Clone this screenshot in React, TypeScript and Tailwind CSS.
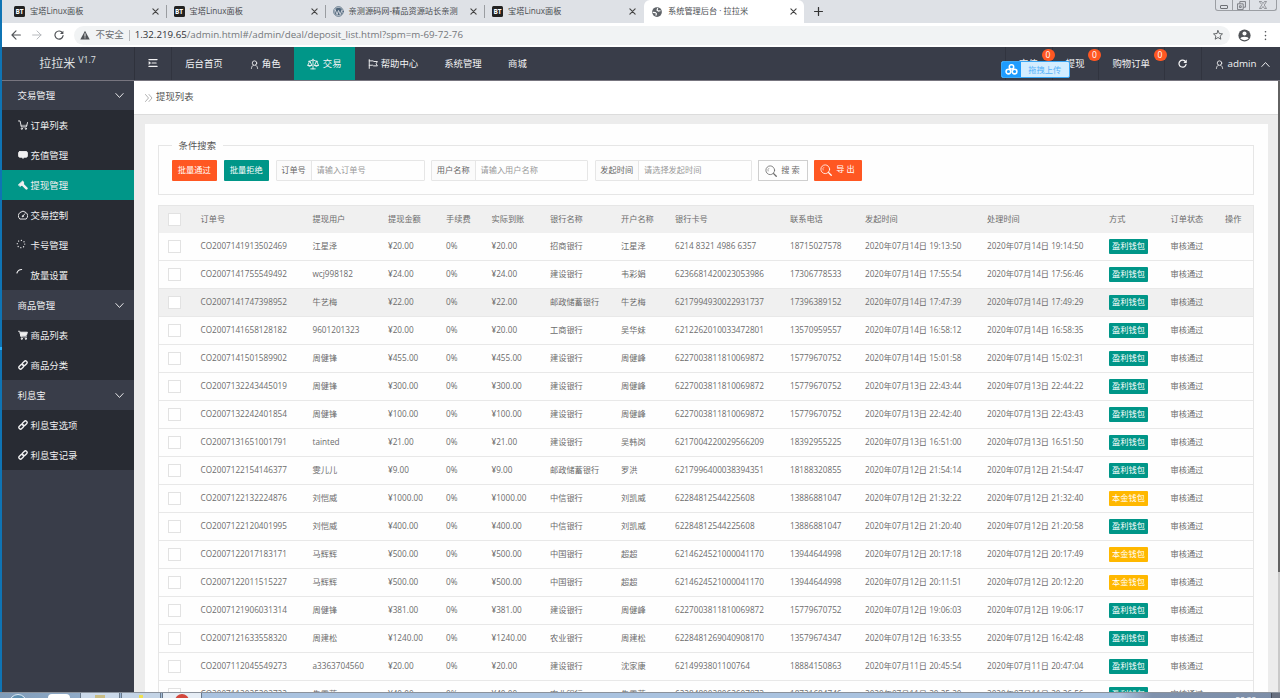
import React from "react";

const tabs = [
  { title: "宝塔Linux面板", icon: "bt", width: "w-[165px] pl-[12.500px]" },
  { title: "宝塔Linux面板", icon: "bt", width: "w-[159px] pl-[7px]" },
  { title: "亲测源码网-精品资源站长亲测", icon: "wp", width: "w-[159.500px] pl-[7px]" },
  { title: "宝塔Linux面板", icon: "bt", width: "w-[159px] pl-[7px]" },
];

const rows: string[][] = [
  ["CO2007141913502469", "江星泽", "20.00", "招商银行", "江星泽", "6214 8321 4986 6357", "18715027578", "14日 19:13:50", "14日 19:14:50"],
  ["CO2007141755549492", "wcj998182", "24.00", "建设银行", "韦彩娟", "6236681420023053986", "17306778533", "14日 17:55:54", "14日 17:56:46"],
  ["CO2007141747398952", "牛艺梅", "22.00", "邮政储蓄银行", "牛艺梅", "6217994930022931737", "17396389152", "14日 17:47:39", "14日 17:49:29"],
  ["CO2007141658128182", "9601201323", "20.00", "工商银行", "吴华妹", "6212262010033472801", "13570959557", "14日 16:58:12", "14日 16:58:35"],
  ["CO2007141501589902", "周健锋", "455.00", "建设银行", "周健峰", "6227003811810069872", "15779670752", "14日 15:01:58", "14日 15:02:31"],
  ["CO2007132243445019", "周健锋", "300.00", "建设银行", "周健峰", "6227003811810069872", "15779670752", "13日 22:43:44", "13日 22:44:22"],
  ["CO2007132242401854", "周健锋", "100.00", "建设银行", "周健峰", "6227003811810069872", "15779670752", "13日 22:42:40", "13日 22:43:43"],
  ["CO2007131651001791", "tainted", "21.00", "建设银行", "吴韩岗", "6217004220029566209", "18392955225", "13日 16:51:00", "13日 16:51:50"],
  ["CO2007122154146377", "雯儿儿", "9.00", "邮政储蓄银行", "罗洪", "6217996400038394351", "18188320855", "12日 21:54:14", "12日 21:54:47"],
  ["CO2007122132224876", "刘恺威", "1000.00", "中信银行", "刘凯威", "62284812544225608", "13886881047", "12日 21:32:22", "12日 21:32:40", "p"],
  ["CO2007122120401995", "刘恺威", "400.00", "中信银行", "刘凯威", "62284812544225608", "13886881047", "12日 21:20:40", "12日 21:20:58"],
  ["CO2007122017183171", "马辉辉", "500.00", "中国银行", "超超", "6214624521000041170", "13944644998", "12日 20:17:18", "12日 20:17:49", "p"],
  ["CO2007122011515227", "马辉辉", "500.00", "中国银行", "超超", "6214624521000041170", "13944644998", "12日 20:11:51", "12日 20:12:20", "p"],
  ["CO2007121906031314", "周健锋", "381.00", "建设银行", "周健峰", "6227003811810069872", "15779670752", "12日 19:06:03", "12日 19:06:17"],
  ["CO2007121633558320", "周建松", "1240.00", "农业银行", "周建松", "6228481269040908170", "13579674347", "12日 16:33:55", "12日 16:42:48"],
  ["CO2007112045549273", "a3363704560", "20.00", "建设银行", "沈家康", "6214993801100764", "18884150863", "11日 20:45:54", "11日 20:47:04"],
  ["CO2007112025202722", "朱雪莲", "40.00", "农业银行", "朱雪莲", "6228480028062607873", "18721684746", "11日 20:25:20", "11日 20:26:56"],
];

const headings = ["订单号", "提现用户", "提现金额", "手续费", "实际到账", "银行名称", "开户名称", "银行卡号", "联系电话", "发起时间", "处理时间", "方式", "订单状态", "操作"];

const gridCols =
  "grid grid-cols-[42px_112px_75.5px_58px_45.5px_58.5px_71px_54px_115px_75px_122px_122px_61.5px_54.5px_1fr] items-center";

function Svg({ children, className = "" }: { children: React.ReactNode; className?: string }) {
  return (
    <svg viewBox="0 0 16 16" className={`shrink-0 ${className}`} fill="none" stroke="currentColor" strokeWidth="1.5" strokeLinecap="round" strokeLinejoin="round">
      {children}
    </svg>
  );
}

const UserIcon = ({ className = "" }) => (
  <Svg className={className}>
    <circle cx="8" cy="5.500" r="4" />
    <path d="M6 9.200C4 10.200 2.800 12 2.500 15M10 9.200c2 1 3.200 2.800 3.500 5.800" />
  </Svg>
);
const Chevron = ({ className = "" }) => (
  <Svg className={className}><path d="M1.500 4.500 8 11.500 14.500 4.500" strokeWidth="1.700" /></Svg>
);
const Close = () => (
  <Svg className="size-[7px] text-[#444]"><path d="m2 2 12 12M14 2 2 14" strokeWidth="2.600" /></Svg>
);

function SideIcon({ name }: { name: string }) {
  const c = "size-[10px] -translate-y-px";
  switch (name) {
    case "cart":
      return <Svg className={c}><path d="M.8 1.500h2.500l2 9.500h8l2-7" /><path d="M5 8.500h9.300" strokeWidth="1" /><circle cx="6" cy="14" r="1" /><circle cx="12.500" cy="14" r="1" /></Svg>;
    case "chat":
      return <Svg className={c}><path d="M3 2.500h10q2 0 2 2v5q0 2-2 2h-3l-2 2-2-2H3q-2 0-2-2v-5q0-2 2-2z" fill="currentColor" /></Svg>;
    case "gavel":
      return <Svg className={c}><path d="M1 7.500 7.500 1.500l2 3.500-5.500 5z" fill="currentColor" /><path d="m7.500 7.500 6 6" strokeWidth="4" /></Svg>;
    case "gauge":
      return <Svg className={c}><path d="M2.500 14a7.200 7.200 0 1 1 11 0zM7.500 10l3.500-4" /><circle cx="7.500" cy="10" r=".8" /></Svg>;
    case "dots":
      return <Svg className="size-[10px] -translate-x-[2px] -translate-y-[2px]"><circle cx="8" cy="8" r="6" strokeDasharray=".1 4.600" strokeWidth="2" /></Svg>;
    case "arc":
      return <Svg className="size-[10px] -translate-x-[2px] -translate-y-[3px]"><path d="M1.500 8A8 8 0 0 1 9 2.500" strokeWidth="1.800" /></Svg>;
    case "cartfill":
      return <Svg className={c}><path d="M.8 2h2l2 9h9" /><path d="M4 3.500h11L13.500 8.500 5 9.500z" fill="currentColor" /><circle cx="6" cy="14" r="1" fill="currentColor" /><circle cx="12.500" cy="14" r="1" fill="currentColor" /></Svg>;
    default:
      return (
        <Svg className={c}>
          <rect x="-4.200" y="-2.700" width="8.400" height="5.400" rx="2.700" transform="translate(10.800 5.200) rotate(-45)" strokeWidth="2.200" />
          <rect x="-4.200" y="-2.700" width="8.400" height="5.400" rx="2.700" transform="translate(5.200 10.800) rotate(-45)" strokeWidth="2.200" />
        </Svg>
      );
  }
}

const menu = [
  { title: "交易管理", items: [["cart", "订单列表"], ["chat", "充值管理"], ["gavel", "提现管理"], ["gauge", "交易控制"], ["dots", "卡号管理"], ["arc", "放量设置"]] },
  { title: "商品管理", items: [["cartfill", "商品列表"], ["link", "商品分类"]] },
  { title: "利息宝", items: [["link", "利息宝选项"], ["link", "利息宝记录"]] },
];

function TabIcon({ kind }: { kind: string }) {
  if (kind === "bt")
    return <span className="flex size-[11px] shrink-0 items-center justify-center rounded-[1.5px] bg-[#222] text-[6.5px] font-bold text-white">BT</span>;
  return (
    <Svg className="size-[11px] text-[#50677c]">
      <circle cx="8" cy="8" r="7" strokeWidth="1.300" />
      <circle cx="8" cy="8" r="5.600" fill="currentColor" stroke="none" />
      <path d="M3 5l3 7.500 2-6 2.500 6L13 6" stroke="#dee1e6" strokeWidth="1.300" />
    </Svg>
  );
}

function BrowserChrome() {
  return (
    <>
      <div className="flex h-[23px] shrink-0 items-stretch bg-[#dee1e6] text-[8.2px] text-[#4a4d51]">
        {tabs.map((t, i) => (
          <div key={i} className={`flex items-center ${t.width}`}>
            <TabIcon kind={t.icon} />
            <span className="ml-[5px] grow whitespace-nowrap">{t.title}</span>
            <Close />
            <span className={`ml-[7px] h-[13px] w-px ${i === 3 ? "bg-transparent" : "bg-[#9a9da1]"}`} />
          </div>
        ))}
        <div className="flex w-[160px] items-center rounded-t-[6px] bg-white pl-[8px] pr-[7px]">
          <Svg className="size-[10px] text-[#5f6368]">
            <circle cx="8" cy="8" r="7.800" fill="currentColor" stroke="none" />
            <path d="M2 8.500l3.500 .5 1.500 1.500-.5 2.500M9 2.500 8 5l2 1.500 3-.5" stroke="white" strokeWidth="1.900" />
          </Svg>
          <span className="ml-[6px] grow whitespace-nowrap">系统管理后台 · 拉拉米</span>
          <Close />
        </div>
        <Svg className="ml-[10px] size-[9px] self-center text-[#333]"><path d="M8 1v14M1 8h14" strokeWidth="2.200" /></Svg>
        <div className="ml-auto mr-[3px] flex h-[11px] w-[62px] rounded-b-[3px] border border-t-0 border-[#9b9ea3] text-[#6d7075]">
          <span className="flex w-[17px] items-center justify-center border-r border-[#9b9ea3]">
            <span className="mt-[3px] h-[4px] w-[8px] rounded-[1px] border border-[#6d7075]" />
          </span>
          <span className="flex w-[17px] items-center justify-center border-r border-[#9b9ea3]">
            <Svg className="size-[9px]"><path d="M5 4V1h10v10h-3M1.500 5h9.500v10H1.500zM5 8.500h2.500v3H5z" /></Svg>
          </span>
          <span className="flex grow items-center justify-center">
            <Svg className="size-[8px]"><path d="M1 1h4l3 4 3-4h4l-4.500 7 4.500 7h-4l-3-4-3 4H1l4.500-7z" strokeWidth="1.300" /></Svg>
          </span>
        </div>
      </div>
      <div className="flex h-[24px] shrink-0 items-center bg-white pl-[9px] text-[#505357]">
        <Svg className="size-[10px]"><path d="M15 8H1.500M8 1.500 1.500 8 8 14.500" strokeWidth="1.800" /></Svg>
        <Svg className="ml-[11px] size-[10px] text-[#b6b9bd]"><path d="M1 8h13.500M8 1.500 14.500 8 8 14.500" strokeWidth="1.600" /></Svg>
        <Svg className="ml-[12px] size-[10px]"><path d="M13.500 4.500A6.500 6.500 0 1 0 14.500 9" strokeWidth="1.900" /><path d="M15 1v5.500H9.500z" fill="currentColor" stroke="none" /></Svg>
        <div className="ml-[10px] flex h-[19px] w-[1156px] shrink-0 items-center rounded-full bg-[#f1f3f4] pl-[6px]">
          <Svg className="size-[10px] text-[#505357]"><path d="M8 1 15.500 15H.5z" fill="currentColor" stroke="none" /><path d="M8 6v4M8 12.500v.2" stroke="white" /></Svg>
          <span className="ml-[6px] text-[9.4px] text-[#6a6d71]">不安全</span>
          <span className="mx-[5px] h-[11px] w-px bg-[#b9bbbe]" />
          <span className="whitespace-nowrap text-[9.720px] text-[#74777b]"><span className="text-[#303236]">1.32.219.65</span>/admin.html#/admin/deal/deposit_list.html?spm=m-69-72-76</span>
          <Svg className="ml-auto mr-[7px] size-[10px]"><path d="m8 1 2.100 4.700 5.100.5-3.800 3.500 1.100 5L8 12l-4.500 2.700 1.100-5L.8 6.200l5.100-.5z" strokeWidth="1.400" /></Svg>
        </div>
        <Svg className="ml-[8px] size-[13px]"><circle cx="8" cy="8" r="7.500" fill="currentColor" stroke="none" /><circle cx="8" cy="5.500" r="2.500" fill="white" stroke="none" /><path d="M3 12q0-2.500 5-2.500t5 2.500q-5 3.500-10 0z" fill="white" stroke="none" /></Svg>
        <Svg className="ml-[9.500px] size-[11px]"><path d="M8 2.500v.1M8 8v.1M8 13.500v.1" strokeWidth="2.400" /></Svg>
      </div>
    </>
  );
}

function Badge() {
  return <span className="absolute -right-[3px] top-[2px] z-10 flex h-[12px] w-[13px] items-center justify-center rounded-full bg-[#ff5722] text-[8.500px] leading-none text-white">0</span>;
}

function Header() {
  return (
    <header className="relative flex h-[33.500px] shrink-0 items-stretch border-b border-[#77757f] bg-[#393d49] text-[9.4px] text-[#f3f3f4]">
      <div className="flex w-[133px] items-center justify-center border-r border-[#2f323c] pt-[2px] text-[12px] text-[#dfe0e2]">
        拉拉米<sup className="-top-[4px] ml-[3px] text-[8.800px] leading-none">V1.7</sup>
      </div>
      <div className="flex w-[37px] items-center justify-center border-r border-[#31343f]">
        <Svg className="size-[10px]"><path d="M1.500 2.500h13M6.500 8H13M1.500 13.500h13M1.500 6.500 3.500 8l-2 1.500" strokeWidth="1.900" /></Svg>
      </div>
      <nav className="flex items-stretch whitespace-nowrap">
        <span className="flex w-[65px] items-center justify-center pt-[2px]">后台首页</span>
        <span className="flex w-[57.500px] items-center justify-center gap-[3px] pt-[2px]"><UserIcon className="size-[9px]" />角色</span>
        <span className="flex w-[60.500px] items-center justify-center gap-[4px] bg-[#009688] pt-[2px]">
          <Svg className="size-[12px]"><path d="M8 1.500v13M5 14.500h6M2 4.500q3-.5 6-2 3 1.500 6 2M3.500 4.500 1 10h5zM12.500 4.500 10 10h5zM1 10q2.500 3 5 0M10 10q2.500 3 5 0" strokeWidth="1.200" /></Svg>交易
        </span>
        <span className="flex w-[77px] items-center justify-center gap-[3px] pt-[2px]">
          <Svg className="size-[10px]"><path d="M2 1v14M2 3h6l1.500 1H15l-2 3.500 2 3.500H9L7.500 10H2" /></Svg>帮助中心
        </span>
        <span className="flex w-[63px] items-center justify-center pt-[2px]">系统管理</span>
        <span className="flex w-[46px] items-center justify-center pt-[2px]">商城</span>
      </nav>
      <div className="ml-auto flex items-stretch whitespace-nowrap">
        <span className="relative flex w-[47px] items-center justify-center border-l border-[#31343f] pt-[2px]">充值<Badge /></span>
        <span className="relative flex w-[46.500px] items-center justify-center border-l border-[#31343f] pt-[2px]">提现<Badge /></span>
        <span className="relative flex w-[65.500px] items-center justify-center border-l border-[#31343f] pt-[2px]">购物订单<Badge /></span>
        <span className="flex w-[37px] items-center justify-center border-l border-[#31343f]">
          <Svg className="size-[9px]"><path d="M13.500 5A6.300 6.300 0 1 0 14.300 9.500" strokeWidth="2.200" /><path d="M15.500 1v6H9.500z" fill="currentColor" stroke="none" /></Svg>
        </span>
        <span className="flex w-[79.500px] items-center border-l border-[#31343f] pl-[13px] pt-[2px] text-[9.800px]">
          <UserIcon className="size-[9px]" /><span className="ml-[4px]">admin</span><Chevron className="ml-[4px] size-[9px] rotate-180" />
        </span>
      </div>
      <div className="absolute left-[999px] top-[14px] flex h-[17px] w-[69.500px] overflow-hidden rounded-[2px] border border-[#3ba7f5] bg-[#d3edff] text-[8.200px] text-[#55b2fa]">
        <span className="flex w-[19px] items-center justify-center bg-[#1e9cff] text-white">
          <Svg className="size-[13px]"><circle cx="8" cy="4.800" r="2.700" strokeWidth="1.900" /><circle cx="4.200" cy="10.500" r="2.900" strokeWidth="1.900" /><circle cx="11.800" cy="10.500" r="2.900" strokeWidth="1.900" /></Svg>
        </span>
        <span className="flex grow items-center justify-center pt-px">拖拽上传</span>
      </div>
    </header>
  );
}

function Sidebar() {
  return (
    <aside className="-mt-[.6px] w-[132.500px] shrink-0 bg-[#393d49] text-[9.400px] text-[#f0f0f1]">
      {menu.map((g) => (
        <div key={g.title}>
          <div className="flex h-[30px] items-center justify-between bg-[#393d49] pl-[16px] pr-[10px] pt-[2.500px]">
            {g.title}<Chevron className="size-[9px] -translate-y-px" />
          </div>
          {g.items.map(([icon, label]) => (
            <div key={label} className={`flex h-[30px] items-center gap-[3px] pl-[16px] pt-[2.500px] ${label === "提现管理" ? "bg-[#009688]" : "bg-[#282b33]"}`}>
              <SideIcon name={icon} />{label}
            </div>
          ))}
        </div>
      ))}
    </aside>
  );
}

function Field({ label, hint, labelWidth, width }: { label: string; hint: string; labelWidth: string; width: string }) {
  return (
    <div className={`flex h-[21px] items-stretch rounded-[1px] border border-[#e6e6e6] ${width}`}>
      <span className={`flex items-center justify-center border-r border-[#e6e6e6] bg-[#fbfbfb] text-[#666] ${labelWidth}`}>{label}</span>
      <span className="flex items-center pl-[5px] text-[#999]">{hint}</span>
    </div>
  );
}

const SearchIcon = () => (
  <Svg className="size-[12px]"><circle cx="7" cy="7" r="5.800" strokeWidth="1.100" /><path d="m11.500 11.500 3.500 3.500" strokeWidth="1.800" /><path d="M4 8a3 3 0 0 1 1-3.500" strokeWidth=".8" /></Svg>
);

const Check = () => <span className="ml-[9px] block size-[13px] border border-[#e2e2e2] bg-white" />;

function Content() {
  return (
    <main className="flex min-w-0 grow flex-col bg-[#ececec]">
      <div className="flex h-[34px] shrink-0 items-center border-b border-[#dcdcdc] bg-white pl-[10.500px] pt-px text-[9.400px] text-[#555]">
        <Svg className="mr-[3.500px] size-[8px] text-[#888]"><path d="m1 1 6 7-6 7M8 1l6 7-6 7" strokeWidth="1.300" /></Svg>提现列表
      </div>
      <div className="ml-[11px] mr-[10px] mt-[9.500px] flex grow flex-col bg-[#fefefe] pl-[12.500px] pr-[14px] pt-[15px] text-[8.200px] text-[#6c6c6c]">
        <fieldset className="mb-[10px] h-[56px] shrink-0 border border-[#e6e6e6] pl-[13px]">
          <legend className="px-[7px] text-[9.400px] leading-[13px] text-[#555]">条件搜索</legend>
          <div className="mt-[8px] flex items-center">
            <span className="flex h-[21px] w-[45.500px] items-center justify-center rounded-[1px] bg-[#ff5722] text-white">批量通过</span>
            <span className="ml-[6.500px] flex h-[21px] w-[45.500px] items-center justify-center rounded-[1px] bg-[#009688] text-white">批量拒绝</span>
            <div className="ml-[6.500px] flex gap-[6.500px]">
              <Field label="订单号" hint="请输入订单号" labelWidth="w-[35px]" width="w-[149px]" />
              <Field label="用户名称" hint="请输入用户名称" labelWidth="w-[43.500px]" width="w-[157px]" />
              <Field label="发起时间" hint="请选择发起时间" labelWidth="w-[43.500px]" width="w-[157px]" />
            </div>
            <span className="ml-[6px] flex h-[21px] w-[50px] items-center justify-center gap-[4px] border border-[#cfcfcf]"><SearchIcon />搜 索</span>
            <span className="ml-[6px] flex h-[21px] w-[48px] items-center justify-center gap-[4px] rounded-[1px] bg-[#ff5722] pb-[2px] text-white"><SearchIcon />导 出</span>
          </div>
        </fieldset>
        <div className="border border-b-0 border-[#e6e6e6]">
          <div className={`${gridCols} h-[26.500px] whitespace-nowrap bg-[#f0f0f0]`}>
            <Check />
            {headings.map((h) => <span key={h}>{h}</span>)}
          </div>
          {rows.map((r, i) => (
            <div key={r[0]} className={`${gridCols} h-[28px] whitespace-nowrap border-b border-[#e8e8e8] ${i === 2 ? "bg-[#f0f0f0]" : ""}`}>
              <Check />
              <span>{r[0]}</span>
              <span>{r[1]}</span>
              <span>¥{r[2]}</span>
              <span>0%</span>
              <span>¥{r[2]}</span>
              <span>{r[3]}</span>
              <span>{r[4]}</span>
              <span>{r[5]}</span>
              <span>{r[6]}</span>
              <span>2020年07月{r[7]}</span>
              <span>2020年07月{r[8]}</span>
              <span className={`flex h-[15px] w-[39px] items-center justify-center rounded-[1px] text-white ${r[9] ? "bg-[#ffb800]" : "bg-[#009688]"}`}>{r[9] ? "本金钱包" : "盈利钱包"}</span>
              <span>审核通过</span>
              <span />
            </div>
          ))}
        </div>
      </div>
    </main>
  );
}

function Taskbar() {
  return (
    <footer className="relative z-10 flex h-[6px] w-full shrink-0 items-stretch overflow-hidden border-t border-[#8b929c] bg-linear-to-r from-[#7f9bb8] from-0% via-[#a9c2df] via-15% to-[#a9c2df] to-85%">
      <span className="ml-[9px] mt-px h-[18px] w-[18px] rounded-full border border-[#dceaf6] bg-[#5f8fb0]" />
      <span className="ml-[21px] mt-px h-[12px] w-[22px] rounded-t-[4px] bg-white" />
      <span className="ml-[10px] flex w-[40px] justify-center border-x border-[#68788a] bg-[#cbd9e9]"><i className="mt-[2px] block h-[4px] w-[10px] bg-[#c9bd85]" /></span>
      <span className="ml-px flex w-[40px] justify-center border-x border-[#68788a] bg-[#c4d4e6]"><i className="mt-[2px] block h-[4px] w-[4px] bg-[#eee04e]" /></span>
      <span className="ml-px flex w-[40px] justify-center border-x border-[#68788a] bg-[#e6edf5]"><i className="mt-px block size-[14px] shrink-0 rounded-full bg-[#d3473c]" /></span>
      <span className="ml-auto flex w-[160px] justify-end bg-linear-to-r from-[#a9c2df] via-[#7f92ad] via-20% to-[#7d8ea8] text-[8px] leading-[12px] text-white"><span className="mr-[15px]">20:30</span><span className="w-[9px] border-l border-[#444b57] bg-[#687080]" /></span>
    </footer>
  );
}

export default function App() {
  return (
    <div className="flex h-[698px] w-[1280px] flex-col overflow-hidden bg-white font-['Open_Sans','Noto_Sans_CJK_SC',sans-serif] leading-normal">
      <div className="flex min-h-0 grow overflow-hidden">
        <div className="flex w-[1.500px] shrink-0 flex-col bg-[#0f74b4]"><span className="mt-[347px] h-[3px] bg-[#24b0ff]" /></div>
        <div className="flex min-w-0 grow flex-col">
          <BrowserChrome />
          <Header />
          <div className="flex min-h-0 grow overflow-hidden">
            <Sidebar />
            <Content />
            <div className="flex w-[2px] shrink-0 flex-col bg-[#c9c9c9]"><span className="h-[491px] bg-[#626262]" /></div>
          </div>
        </div>
      </div>
      <Taskbar />
    </div>
  );
}
